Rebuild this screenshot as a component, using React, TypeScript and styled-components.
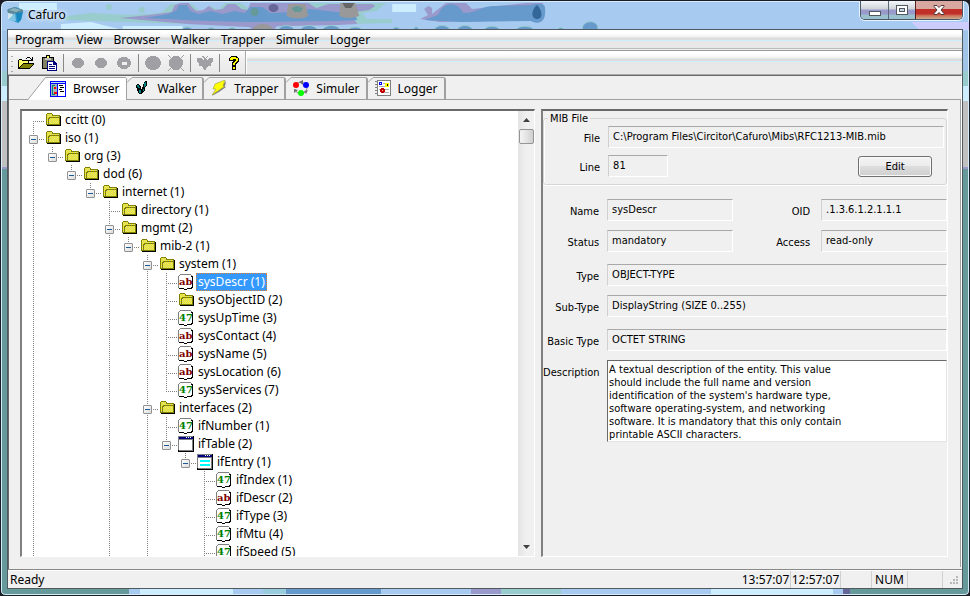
import React, { useState } from 'react';
import styled, { createGlobalStyle, css } from 'styled-components';

const GlobalStyle = createGlobalStyle`
  * { box-sizing: border-box; }
  body { margin: 0; background: #1c1c24; }
  button, input, textarea { font: inherit; color: inherit; margin: 0; }
`;

const uiFont = '"Noto Sans", "Open Sans", sans-serif';
const formFont = '"DejaVu Sans Condensed", "DejaVu Sans", sans-serif';

const glass = css`
  background: linear-gradient(#ffffff 0 3px, #f0f0f0 7px, #dcdcdc 8px 10px, #cceeff 10px 11px, #e8e8e8 11px);
`;

/* ---------- window frame ---------- */

const Frame = styled.div`
  position: relative;
  isolation: isolate;
  height: 100vh;
  display: flex;
  flex-direction: column;
  overflow: hidden;
  padding: 0 6px 6px;
  border: 1px solid #1c1c24;
  border-radius: 7px 7px 5px 5px;
  box-shadow: inset 0 0 0 1px #d4ecfc;
  font: 12px/16px ${uiFont};
  color: #000;
  background:
    linear-gradient(90deg, #669999 0 128px, #a6caf0 128px 139px, #cceeff 139px 232px, #a6caf0 232px 262px, #99ccdd 262px 285px, #6699cc 285px 380px, #a6caf0 380px 470px, #9999cc 470px 500px, #99cccc 500px 560px, #a6caf0 560px 710px, #cceeff 710px 832px, #a6caf0 832px 842px, #666699 842px 849px, #669999 849px) bottom / 100% 7px no-repeat,
    linear-gradient(#a6caf0 0 30px, #9fc4e8 30px 70px, #99cccc 70px 85px, #cceeff 85px 100px, #c0c0c0 100px 166px, #9999cc 166px 168px, #669999 168px);
`;

const Backdrop = styled.svg`
  position: absolute;
  z-index: -1;
  left: 0;
  top: 1px;
  width: 100%;
  height: 28px;
`;

const TitleBar = styled.header`
  display: flex;
  align-items: center;
  height: 28px;
  flex: none;
`;

const Title = styled.h1`
  flex: 1;
  margin: 0 0 0 4px;
  font-size: 12px;
  line-height: 16px;
  font-weight: 400;
  text-shadow: 0 0 6px #fff, 0 0 4px #fff;
`;

const Caption = styled.div`
  align-self: flex-start;
  display: flex;
  height: 19px;
  border: 1px solid #4a5868;
  border-top: 0;
  border-radius: 0 0 5px 5px;
  overflow: hidden;
  box-shadow: 0 0 0 1px #e6f2fc;
`;

const CaptionButton = styled.button<{ $close?: boolean }>`
  width: ${p => (p.$close ? 47 : 27)}px;
  padding: 0;
  border: 0;
  border-left: 1px solid ${p => (p.$close ? '#5a2020' : '#5a6878')};
  background: ${p => (p.$close
    ? 'linear-gradient(#d8a8a0 0 8px, #c03028 8px 13px, #cc6650 14px, #c8b090)'
    : 'linear-gradient(#f4f8fc 0, #cfd4da 8px, #9999cc 9px 13px, #99c0cc 14px)')};
  display: flex;
  align-items: center;
  justify-content: center;
  &:first-child { border-left: 0; padding-top: 6px; }
`;

const Client = styled.div`
  flex: 1;
  min-height: 0;
  display: flex;
  flex-direction: column;
  border: 1px solid #505860;
  background: #f0f0f0;
`;

/* ---------- menu and toolbar ---------- */

const MenuBar = styled.nav`
  display: flex;
  flex: none;
  height: 19px;
  padding-left: 2px;
  border-bottom: 1px solid #bbb;
  ${glass}
`;

const MenuItem = styled.button`
  padding: 2px 7px 0 5px;
  border: 0;
  background: none;
  line-height: 16px;
  & + & { padding: 2px 6px 0 5px; }
`;

const ToolBand = styled.div`
  display: flex;
  flex: none;
  height: 25px;
  margin-top: 1px;
  border-top: 1px solid #999;
  border-bottom: 1px solid #aaa;
  ${glass}
`;

const ToolBar = styled.div`
  display: flex;
  align-items: center;
  padding-left: 2px;
  background: linear-gradient(#fafafa, #f0f0f0 8px, #e9e9e9);
  border-right: 1px solid #aaa;
  box-shadow: 1px 0 0 #fff;
`;

const Grip = styled.span`
  width: 4px;
  height: 18px;
  background: radial-gradient(circle, #aaa 1px, transparent 1px) 0 0 / 4px 5px;
`;

const ToolButton = styled.button`
  width: 23px;
  height: 22px;
  padding: 0;
  border: 0;
  background: none;
  display: flex;
  align-items: center;
  justify-content: center;
`;

const ToolSeparator = styled.span`
  width: 6px;
  height: 18px;
  background: linear-gradient(#888, #888) 3px 0 / 1px 100% no-repeat;
`;

/* ---------- tabs ---------- */

const Workspace = styled.main`
  flex: 1;
  min-height: 0;
  display: flex;
  flex-direction: column;
  border: 1px solid #696969;
  border-right-color: #fff;
  border-bottom: 0;
  padding: 0 0 2px;
`;

const TabStrip = styled.div`
  display: flex;
  flex: none;
  height: 23px;
  padding: 1px 0 0 19px;
`;

const Tab = styled.button<{ $active?: boolean }>`
  display: flex;
  align-items: center;
  height: 22px;
  padding: 0 6px 0 0;
  border: 0;
  border-right: 2px solid #a0a0a0;
  border-radius: 0 3px 0 0;
  color: #000;
  background: linear-gradient(#a0a0a0, #a0a0a0) 5px 0 / 100% 1px no-repeat;
  ${p => p.$active && css`
    position: relative;
    height: 23px;
    padding-right: 7px;
    border-right: 1px solid #a0a0a0;
    background: linear-gradient(90deg, transparent 17px, #a0a0a0 17px) 0 0 / 100% 1px no-repeat,
      linear-gradient(90deg, transparent 17px, #fff 17px);
  `}
`;

const TabText = styled.span`
  margin-left: 7px;
  padding-top: 1px;
`;

const TabPage = styled.section`
  flex: 1;
  min-height: 0;
  display: grid;
  grid-template-columns: minmax(0, 514fr) minmax(0, 406fr);
  grid-template-rows: minmax(0, 1fr);
  column-gap: 6px;
  padding: 9px 12px 10px 11px;
  border-top: 1px solid #a0a0a0;
  border-right: 1px solid #a0a0a0;
`;

const Sunken = styled.div`
  border: 1px solid #fff;
  border-top: 2px solid #696969;
  border-left: 2px solid #808080;
`;

/* ---------- tree ---------- */

const TreePane = styled(Sunken)`
  display: flex;
  background: #fff;
`;

const TreeList = styled.ul`
  flex: 1;
  min-width: 0;
  margin: 0;
  padding: 0 0 0 2px;
  overflow: hidden;
  list-style: none;
`;

const TreeRow = styled.li`
  display: flex;
  align-items: center;
  height: 18px;
`;

const dotsDown = 'repeating-linear-gradient(#808080 0 1px, transparent 1px 2px)';
const dotsAcross = 'repeating-linear-gradient(90deg, #808080 0 1px, transparent 1px 2px)';

const Guide = styled.span<{ $on: boolean }>`
  flex: none;
  width: 19px;
  height: 18px;
  background: ${p => (p.$on ? `${dotsDown} 9px 0 / 1px 18px no-repeat` : 'none')};
`;

const Joint = styled.span<{ $first: boolean; $last: boolean }>`
  flex: none;
  display: flex;
  width: 21px;
  height: 18px;
  padding: 6px 0 0 5px;
  background:
    ${dotsDown} 9px ${p => (p.$first ? 10 : 0)}px / 1px ${p => (p.$first ? 8 : p.$last ? 10 : 18)}px no-repeat,
    ${dotsAcross} 9px 10px / 12px 1px no-repeat;
`;

const Toggle = styled.button`
  width: 9px;
  height: 9px;
  padding: 0;
  border: 1px solid #919191;
  border-radius: 1px;
  background:
    linear-gradient(#1e5a96, #1e5a96) center / 5px 1px no-repeat,
    linear-gradient(135deg, #fff, #dcdcdc);
`;

const NodeLabel = styled.button<{ $selected: boolean }>`
  flex: none;
  height: 18px;
  margin-left: 2px;
  padding: 0 1px;
  border: 1px ${p => (p.$selected ? 'dotted #e08030' : 'solid transparent')};
  background: ${p => (p.$selected ? '#3399ff' : 'none')};
  color: ${p => (p.$selected ? '#fff' : '#000')};
  line-height: 16px;
  white-space: nowrap;
`;

const ScrollTrack = styled.div`
  flex: none;
  width: 16px;
  display: flex;
  flex-direction: column;
  align-items: center;
  background: linear-gradient(90deg, #e3e3e3, #f0f0f0 8px);
`;

const ScrollArrow = styled.button<{ $end?: boolean }>`
  display: flex;
  align-items: center;
  justify-content: center;
  width: 16px;
  height: 18px;
  padding: 0;
  margin-top: ${p => (p.$end ? 'auto' : '0')};
  border: 0;
  background: none;
`;

const ScrollThumb = styled.div`
  width: 15px;
  height: 15px;
  border: 1px solid #959595;
  border-radius: 2px;
  background: linear-gradient(90deg, #f4f4f4, #e4e4e4 50%, #cfcfcf);
`;

/* ---------- details form ---------- */

const Details = styled(Sunken)`
  padding-top: 1px;
  font: 11px/13px ${formFont};
  color: #000;
  overflow: hidden;
`;

const Group = styled.fieldset`
  min-width: 0;
  margin: 0 0 14px;
  padding: 0 2px 7px 0;
  border: 1px solid #d5d5d5;
  border-radius: 3px;
  box-shadow: inset 1px 0 0 #fff, 0 1px 0 #fff;
`;

const GroupTitle = styled.legend`
  margin-left: 4px;
  padding: 0 2px;
`;

const FormRow = styled.div<{ $pair?: boolean; $gap?: number }>`
  display: grid;
  grid-template-columns: ${p => (p.$pair ? '56px minmax(0, 1fr) 72px minmax(0, 1fr)' : '56px minmax(0, 1fr)')};
  column-gap: 8px;
  margin-top: ${p => p.$gap ?? 0}px;
`;

const FieldLabel = styled.label<{ $inner?: boolean }>`
  padding: 6px ${p => (p.$inner ? 3 : 0)}px 0 0;
  text-align: right;
  white-space: nowrap;
`;

const Field = styled.input<{ $short?: boolean }>`
  width: ${p => (p.$short ? '60px' : '100%')};
  height: 22px;
  padding: 0 4px 2px;
  border: 1px solid #fff;
  border-top-color: #a8a8a8;
  border-left-color: #d0d0d0;
  background: #f0f0f0;
  outline: 0;
`;

const LineCell = styled.div`
  display: flex;
  justify-content: space-between;
  align-items: center;
  padding-right: 12px;
`;

const EditButton = styled.button`
  width: 74px;
  height: 21px;
  padding: 0;
  border: 1px solid #707070;
  border-radius: 3px;
  background: linear-gradient(#f4f4f4, #ebebeb 50%, #dddddd 50%, #cfcfcf);
  box-shadow: inset 0 0 0 1px #fafafa;
`;

const Memo = styled.textarea`
  display: block;
  width: 100%;
  height: 82px;
  padding: 2px 0 0 1px;
  border: 1px solid #e3e3e3;
  border-top: 1px solid #696969;
  border-left: 1px solid #696969;
  border-radius: 0;
  background: #fff;
  resize: none;
  outline: 0;
  overflow: hidden;
`;

/* ---------- status bar ---------- */

const StatusBar = styled.footer`
  display: flex;
  flex: none;
  height: 19px;
  border-top: 1px solid #888;
  box-shadow: inset 0 1px 0 #fff;
`;

const StatusCell = styled.span<{ $w?: number }>`
  ${p => (p.$w ? `width: ${p.$w}px;` : 'flex: 1;')}
  padding: 1px 3px 0 2px;
  margin-top: 1px;
  white-space: nowrap;
  border-right: 1px solid #d0d0d0;
  &:first-child, &:last-child { border-right: 0; }
`;

const ClockCell = styled(StatusCell)`
  padding: 1px 0 0;
  text-align: center;
`;

/* ---------- drawings ---------- */

const Pixels = ({ w = 16, h = 16, children }: { w?: number; h?: number; children: React.ReactNode }) => (
  <svg width={w} height={h} viewBox={`0 0 ${w} ${h}`} shapeRendering="crispEdges" aria-hidden="true">
    {children}
  </svg>
);

const TitleArt = () => (
  <Backdrop viewBox="0 0 970 28" preserveAspectRatio="none" aria-hidden="true">
    <path fill="#cceeff" d="M18 1h38v7H18zM60 22l30-2 32 8H60zM122 24h60v4h-60zM392 2h24v8h-24z" />
    <path fill="#99cccc" d="M66 14l24-3 40 2 30-2 10-9h22l8 8 10-6 8 4 6-7h16l8 5 4-5h84l50 0 -10 8-14 2 5 6h25v4l-140 3-190-6z" />
    <path fill="#a6caf0" d="M82 1h88l-8 8-32 2-44-1zM344 10l10 0 0 4-6 0z" />
    <circle cx="108" cy="5" r="3" fill="#99cccc" />
    <circle cx="141" cy="8" r="3" fill="#99cccc" />
    <path fill="#9999cc" d="M119 16l30-3 22-3 3-7 6-2h8l4 5 4 3 7-1 5-4 6 4 8-1 5-5h8l6 5 6 1 3-7h58l8 5 12-4h44l3 2-6 4-14 2-2 6 4 6-20 1-90 2-60-3z" />
    <path fill="#6699cc" d="M144 16l24-4 8-4 2-5h8l4 6 8 3 12-3 12 3 12-3 10 2 6-6h12l8 6 26-1 14-3 26 3h18l3 8-20 1-90 1-40-1z" />
    <ellipse cx="273" cy="6" rx="5" ry="4" fill="#666699" />
    <ellipse cx="254" cy="10" rx="4" ry="4" fill="#669999" />
    <path fill="#999999" d="M288 2h17l3 12q-10 5-22 0zM340 1h15l4 13q-11 4-20 0z" />
    <path fill="#669999" d="M291 6l6-2 6 2-3 4h-6z" />
    <path fill="#666666" d="M342 1h12l-3 5h-6z" />
    <path fill="#9999cc" d="M420 17l8-4-4-6 4-3 4 2 0 6 14-11h20l6 6 54-6h17l-3 17-100 2z" />
    <path fill="#6699cc" d="M424 18l14-5c5-14 20-14 25-2 14 0 18-7 32-7l36-1c5-2 14-2 14 2 2 16-6 18-14 14l-70 1z" />
    <path fill="#336699" d="M537 3c5 4 7 14 0 14-6 0-6-9 0-14z" />
    <path fill="#9999cc" d="M244 20h34l-4 8h-22z" />
    <path fill="#999999" d="M252 28c2-8 18-8 21 0z" />
    <g fill="#6699cc" stroke="#99cccc" strokeWidth="1">
      <path d="M181 28c2-4 9-4 11 0zM206 28c2-3 7-3 9 0zM227 28c2-3 7-3 9 0zM278 28c2-6 14-6 16 0zM300 28c2-6 15-6 17 0zM322 28c2-6 16-6 18 0zM348 28c2-4 12-4 14 0zM392 28c2-4 6-4 8 0zM413 28c2-4 4-4 6 0zM434 28c2-6 14-6 16 0zM457 28c2-6 14-6 16 0zM484 28c2-5 14-5 16 0zM516 28c2-5 16-5 18 0zM557 28c2-3 6-3 8 0z" />
      <path d="M583 28c-3-10 17-12 15 0z" />
    </g>
    <path fill="#ccccff" d="M912 20h58v8h-50z" />
  </Backdrop>
);

const AppLogo = () => (
  <svg width="17" height="16" viewBox="0 0 17 16" aria-hidden="true">
    <path d="M1 2l8-2 7 3-2 9-3 4-5-2-5-2z" fill="#3399cc" />
    <path d="M0 3l7-3 9 3v2L9 7 1 6z" fill="#608898" />
    <path d="M2 3l5-2 7 2-5 2z" fill="#88b4c0" />
    <path d="M1 6l5 1-1 4-4 2z" fill="#d0e4ec" />
    <path d="M9 6l7-1-2 8-3 3z" fill="#1888c0" />
    <path d="M1 13l7-7 1 8-3 0z" fill="#80c4e4" />
  </svg>
);

const Folder = () => (
  <Pixels>
    <defs>
      <pattern id="folderDither" width="2" height="2" patternUnits="userSpaceOnUse">
        <path fill="#ffff00" d="M0 0h2v2H0z" />
        <path fill="#cccc99" d="M1 0h1v1H1zM0 1h1v1H0z" />
      </pattern>
    </defs>
    <path fill="#000" d="M15 4h1v10h-1zM2 13h14v1H2z" />
    <path fill="#808000" d="M1 2h1V1h5v1h1v1h7v10H1z" />
    <path fill="url(#folderDither)" d="M2 2h5v2h7v1H5v1H3v6H2zM4 7h1V6h9v6H3V8h1z" />
    <path fill="#808000" d="M3 6h1V5h10v1H4v6H3z" />
  </Pixels>
);

const PageArt = ({ text, color }: { text: string; color: string }) => (
  <svg width="16" height="16" viewBox="0 0 16 16" aria-hidden="true">
    <g shapeRendering="crispEdges">
      <path fill="#808080" d="M2 0h11v1H2zM1 1h1v1H1zM0 2h1v12H0zM13 1h1v2h-1z" />
      <path fill="#000" d="M13 2h2v12h-1v1h-1v-1h1V3h-1zM1 14h5v1H1zM6 15h3v1H6zM9 14h4v-1h1v2H9z" />
      <path fill="#fff" d="M2 1h11v2h1v10h-5v1H1V2h1z" />
    </g>
    <text x="1" y="11" fontFamily="DejaVu Serif" fontSize="10" fontWeight="700" fill={color}>{text}</text>
  </svg>
);

const TableArt = ({ rows }: { rows?: boolean }) => (
  <Pixels>
    <path fill="#808080" d="M0 0h15v15H0z" />
    <path fill="#000" d="M15 0h1v16H0v-2h1v1h14z" />
    <path fill="#000080" d="M1 1h14v2H1z" />
    <path fill="#fff" d="M1 4h13v10H1zM8 1h1v1H8zM10 1h1v1h-1zM12 1h1v1h-1z" />
    {rows && <path fill="#00ffff" d="M3 6h10v2H3zM3 10h10v2H3z" />}
  </Pixels>
);

const OpenIcon = () => (
  <Pixels>
    <path fill="#000" d="M9 2h3v1H9zM8 3h1v1H8zM12 3h1v1h-1zM14 2h1v4h-4V5h2V4h1zM1 5h3V4H1zM0 5h1v9H0zM4 5h7v1H4zM10 6h1v3h-1zM5 8h11v1H5zM4 9h1v1H4zM3 10h1v1H3zM2 11h1v1H2zM1 12h1v2H1zM15 9h1v1h-1zM14 10h1v1h-1zM13 11h1v1h-1zM12 12h1v1h-1zM1 13h11v1H1z" />
    <path fill="#ffff66" d="M1 5h3v1h6v2H5v1H4v1H3v1H2v1H1z" />
    <path fill="#808000" d="M5 9h10v1h-1v1h-1v1h-1v1H2v-1h1v-1h1v-1h1z" />
  </Pixels>
);

const PasteIcon = () => (
  <Pixels>
    <path fill="#000" d="M5 0h4v2h4v12H1V2h4z" />
    <path fill="#808066" d="M2 3h10v10H2z" />
    <path fill="#ffff66" d="M6 1h2v2H6z" />
    <path fill="#c0c0c0" d="M4 3h6v2H4z" />
    <path fill="#000080" d="M6 6h7l3 3v7H6z" />
    <path fill="#fff" d="M7 7h5v3h3v5H7z" />
    <path fill="#000080" d="M8 9h3v1H8zM8 11h6v1H8zM8 13h6v1H8z" />
  </Pixels>
);

const DotIcon = ({ rx, ry, hole, rays }: { rx: number; ry: number; hole?: boolean; rays?: boolean }) => (
  <Pixels>
    <ellipse cx="8" cy="8" rx={rx} ry={ry} fill="#a0a0a4" />
    {hole && <path fill="#f0f0f0" d="M6 7h5v3H6z" />}
    {rays && <path stroke="#a0a0a4" d="M0 0l16 16M16 0L0 16" />}
  </Pixels>
);

const BugIcon = () => (
  <Pixels>
    <path fill="#a0a0a4" d="M0 3h4l2 2 1-1-2-3h1l2 2 2-2h1L9 4l1 1 2-2h4v4l-2 1v3h-2l-2 1-1 3H7l-1-3-2-1H2V8L0 7z" />
  </Pixels>
);

const HelpIcon = () => (
  <Pixels>
    <path fill="#000" d="M5 1h6v1h1v1h1v4h-1v1h-1v1h-1v2H6V7h1V6H3V3h1V2h1zM6 11h4v4H6z" />
    <path fill="#ffff00" d="M5 2h5v1h2v3h-1v1h-1v1H9v2H7V8h1V7h1V6h1V4H7v1H4V3h1zM7 12h2v2H7z" />
  </Pixels>
);

const BrowserIcon = () => (
  <Pixels>
    <path fill="#0000ff" d="M0 0h16v16H0z" />
    <path fill="#c0e0ff" d="M1 1h14v1H1z" />
    <path fill="#fff" d="M8 3h7v12H8z" />
    <path fill="#a0b8b8" d="M1 3h6v12H1z" />
    <path fill="#008080" d="M2 4h3v1H3v8h2v1H2z" />
    <path fill="#ff0000" d="M4 6h2v2H4zM4 11h3v2H4z" />
    <path fill="#000" d="M9 4h4v1H9zM10 6h4v1h-4zM9 8h3v1H9zM10 10h4v1h-4z" />
  </Pixels>
);

const WalkerIcon = () => (
  <Pixels>
    <path fill="#000" d="M3 4h2l2 3v2l1 1v3l-1 1H5l-1-2-1-3-1-2zM11 1h2v4l-2 3v2l-2 3H8V9l1-4z" />
    <path fill="#008080" d="M3 5h2l1 3H4zM5 10h2v3H5zM11 2h1v3l-2 2V5zM9 9h1v2H9z" />
  </Pixels>
);

const TrapperIcon = () => (
  <svg width="16" height="16" viewBox="0 0 16 16" aria-hidden="true">
    <path d="M15 1l-1 6h1L8 12l-7 4 4-5z" fill="#808080" />
    <path d="M4 4l10-4-2 6h2L7 11l-6 4 4-6H2z" fill="#ffff00" stroke="#a0a040" strokeWidth=".6" />
  </svg>
);

const SimulerIcon = () => (
  <svg width="16" height="16" viewBox="0 0 16 16" aria-hidden="true">
    <circle cx="8" cy="8" r="6" fill="none" stroke="#909090" strokeDasharray="7 3" />
    <path fill="#707070" d="M10 0v5L6 2zM1 9l4 1-4 3zM11 11l4-1-2 4z" />
    <circle cx="3" cy="5" r="3" fill="#ff0000" />
    <circle cx="13" cy="5" r="3" fill="#0000ff" />
    <circle cx="8" cy="13" r="3" fill="#00ff00" />
  </svg>
);

const LoggerIcon = () => (
  <Pixels>
    <path fill="#808080" d="M2 0h14v16H2zM0 1h2v1H0zM0 4h2v1H0zM0 7h2v1H0zM0 10h2v1H0zM0 13h2v1H0z" />
    <path fill="#fff" d="M3 1h12v14H3z" />
    <path fill="#b0b0b0" d="M8 3h6v1H8zM4 6h9v1H4zM4 9h10v1H4zM9 12h5v1H9z" />
    <path fill="#0000ff" d="M4 2h3v3H4z" />
    <path fill="#fff" d="M5 3h1v1H5z" />
    <path fill="#ffff00" d="M10 3h4v4h-4z" />
    <path fill="#000" d="M12 4h1v2h-1z" />
    <path fill="#c00000" d="M6 8h3v1h1v3H9v1H6v-1H5V9h1z" />
    <path fill="#ffb0b0" d="M7 10h1v1H7z" />
  </Pixels>
);

const Slant = ({ active }: { active?: boolean }) =>
  active ? (
    <svg width="22" height="23" viewBox="0 0 22 23" aria-hidden="true">
      <path d="M0 23L18 0v23z" fill="#fff" />
      <path d="M0 22.5L17.5 .5H22" fill="none" stroke="#a0a0a0" />
    </svg>
  ) : (
    <svg width="7" height="22" viewBox="0 0 7 22" aria-hidden="true">
      <path d="M0 5.5L5 .5h2" fill="none" stroke="#a0a0a0" />
    </svg>
  );

const Arrow = ({ down }: { down?: boolean }) => (
  <svg width="7" height="4" viewBox="0 0 7 4" aria-hidden="true">
    <path d={down ? 'M0 0h7L3.5 4z' : 'M0 4h7L3.5 0z'} fill="#404040" />
  </svg>
);

const SizeGrip = () => (
  <Pixels w={14} h={14}>
    <path fill="#b8b8b8" d="M11 4h2v2h-2zM8 7h2v2H8zM11 7h2v2h-2zM5 10h2v2H5zM8 10h2v2H8zM11 10h2v2h-2z" />
  </Pixels>
);

/* ---------- data ---------- */

type Kind = 'folder' | 'string' | 'number' | 'table' | 'entry';
interface Node { name: string; kind?: Kind; kids?: Node[]; more?: boolean }

const str = (name: string): Node => ({ name, kind: 'string' });
const num = (name: string): Node => ({ name, kind: 'number' });

const mib: Node[] = [
  { name: 'ccitt (0)' },
  { name: 'iso (1)', more: true, kids: [
    { name: 'org (3)', kids: [
      { name: 'dod (6)', kids: [
        { name: 'internet (1)', kids: [
          { name: 'directory (1)' },
          { name: 'mgmt (2)', more: true, kids: [
            { name: 'mib-2 (1)', kids: [
              { name: 'system (1)', kids: [
                str('sysDescr (1)'), { name: 'sysObjectID (2)' }, num('sysUpTime (3)'), str('sysContact (4)'),
                str('sysName (5)'), str('sysLocation (6)'), num('sysServices (7)'),
              ] },
              { name: 'interfaces (2)', more: true, kids: [
                num('ifNumber (1)'),
                { name: 'ifTable (2)', kind: 'table', kids: [
                  { name: 'ifEntry (1)', kind: 'entry', kids: [
                    num('ifIndex (1)'), str('ifDescr (2)'), num('ifType (3)'), num('ifMtu (4)'),
                    { ...num('ifSpeed (5)'), more: true },
                  ] },
                ] },
              ] },
            ] },
          ] },
        ] },
      ] },
    ] },
  ] },
];

const glyphs: Record<Kind, React.ReactNode> = {
  folder: <Folder />,
  string: <PageArt text="ab" color="#800000" />,
  number: <PageArt text="47" color="#008000" />,
  table: <TableArt />,
  entry: <TableArt rows />,
};

interface BranchProps {
  nodes: Node[];
  guides?: boolean[];
  selected: string;
  closed: string[];
  onSelect: (name: string) => void;
  onToggle: (name: string) => void;
}

const Branch = ({ nodes, guides = [], ...rest }: BranchProps) => (
  <>
    {nodes.map((node, i) => {
      const last = i === nodes.length - 1 && !node.more;
      return (
        <React.Fragment key={node.name}>
          <TreeRow>
            {guides.map((on, g) => <Guide key={g} $on={on} />)}
            <Joint $first={guides.length === 0 && i === 0} $last={last}>
              {node.kids && <Toggle aria-label={`Toggle ${node.name}`} onClick={() => rest.onToggle(node.name)} />}
            </Joint>
            {glyphs[node.kind ?? 'folder']}
            <NodeLabel $selected={rest.selected === node.name} onClick={() => rest.onSelect(node.name)}>
              {node.name}
            </NodeLabel>
          </TreeRow>
          {node.kids && !rest.closed.includes(node.name) && (
            <Branch nodes={node.kids} guides={[...guides, !last]} {...rest} />
          )}
        </React.Fragment>
      );
    })}
  </>
);

const tabs = [
  { name: 'Browser', icon: <BrowserIcon /> },
  { name: 'Walker', icon: <WalkerIcon /> },
  { name: 'Trapper', icon: <TrapperIcon /> },
  { name: 'Simuler', icon: <SimulerIcon /> },
  { name: 'Logger', icon: <LoggerIcon /> },
];

const tools: (null | { name: string; icon: React.ReactNode })[] = [
  { name: 'Open', icon: <OpenIcon /> },
  { name: 'Paste', icon: <PasteIcon /> },
  null,
  { name: 'Get', icon: <DotIcon rx={6} ry={5} /> },
  { name: 'Get next', icon: <DotIcon rx={6} ry={5} /> },
  { name: 'Set', icon: <DotIcon rx={7} ry={6} hole /> },
  null,
  { name: 'Walk', icon: <DotIcon rx={8} ry={7} /> },
  { name: 'Stop', icon: <DotIcon rx={7} ry={7} rays /> },
  null,
  { name: 'Trap', icon: <BugIcon /> },
  null,
  { name: 'Help', icon: <HelpIcon /> },
];

const description = `A textual description of the entity. This value
should include the full name and version
identification of the system's hardware type,
software operating-system, and networking
software. It is mandatory that this only contain
printable ASCII characters.`;

const TextField = ({ id, label, value, inner }: { id: string; label: string; value: string; inner?: boolean }) => (
  <>
    <FieldLabel htmlFor={id} $inner={inner}>{label}</FieldLabel>
    <Field id={id} value={value} readOnly />
  </>
);

export default function App() {
  const [selected, setSelected] = useState('sysDescr (1)');
  const [closed, setClosed] = useState<string[]>([]);
  const toggle = (name: string) =>
    setClosed(list => (list.includes(name) ? list.filter(n => n !== name) : [...list, name]));

  return (
    <>
      <GlobalStyle />
      <Frame>
        <TitleArt />
        <TitleBar>
          <AppLogo />
          <Title>Cafuro</Title>
          <Caption>
            <CaptionButton aria-label="Minimize">
              <Pixels w={12} h={5}><path fill="#505860" d="M0 0h12v5H0z" /><path fill="#fff" d="M1 1h10v3H1z" /></Pixels>
            </CaptionButton>
            <CaptionButton aria-label="Maximize">
              <Pixels w={12} h={10}>
                <path fill="#505860" d="M0 0h12v10H0z" /><path fill="#fff" d="M1 1h10v8H1z" />
                <path fill="#505860" d="M3 3h6v4H3z" /><path fill="#c8d4e0" d="M4 4h4v2H4z" />
              </Pixels>
            </CaptionButton>
            <CaptionButton aria-label="Close" $close>
              <svg width="12" height="10" viewBox="0 0 12 10" aria-hidden="true">
                <path d="M1 .5h3l2 2 2-2h3v1L8 5l3 3.500v1H8l-2-2-2 2H1v-1L4 5 1 1.500z" fill="#fff" stroke="#503838" />
              </svg>
            </CaptionButton>
          </Caption>
        </TitleBar>
        <Client>
          <MenuBar>
            {['Program', 'View', 'Browser', 'Walker', 'Trapper', 'Simuler', 'Logger'].map(item => (
              <MenuItem key={item}>{item}</MenuItem>
            ))}
          </MenuBar>
          <ToolBand>
            <ToolBar>
              <Grip />
              {tools.map((tool, i) =>
                tool ? <ToolButton key={i} aria-label={tool.name}>{tool.icon}</ToolButton> : <ToolSeparator key={i} />
              )}
            </ToolBar>
          </ToolBand>
          <Workspace>
            <TabStrip role="tablist">
              {tabs.map((tab, i) => (
                <Tab key={tab.name} role="tab" aria-selected={i === 0} $active={i === 0}>
                  <Slant active={i === 0} />
                  {tab.icon}
                  <TabText>{tab.name}</TabText>
                </Tab>
              ))}
            </TabStrip>
            <TabPage>
              <TreePane>
                <TreeList>
                  <Branch nodes={mib} selected={selected} closed={closed} onSelect={setSelected} onToggle={toggle} />
                </TreeList>
                <ScrollTrack>
                  <ScrollArrow aria-label="Scroll up"><Arrow /></ScrollArrow>
                  <ScrollThumb />
                  <ScrollArrow aria-label="Scroll down" $end><Arrow down /></ScrollArrow>
                </ScrollTrack>
              </TreePane>
              <Details>
                <Group>
                  <GroupTitle>MIB File</GroupTitle>
                  <FormRow $gap={1}>
                    <TextField id="file" label="File" value="C:\Program Files\Circitor\Cafuro\Mibs\RFC1213-MIB.mib" />
                  </FormRow>
                  <FormRow $gap={7}>
                    <FieldLabel htmlFor="line">Line</FieldLabel>
                    <LineCell>
                      <Field id="line" value="81" readOnly $short />
                      <EditButton>Edit</EditButton>
                    </LineCell>
                  </FormRow>
                </Group>
                <FormRow $pair>
                  <TextField id="name" label="Name" value="sysDescr" />
                  <TextField id="oid" label="OID" value=".1.3.6.1.2.1.1.1" inner />
                </FormRow>
                <FormRow $pair $gap={9}>
                  <TextField id="status" label="Status" value="mandatory" />
                  <TextField id="access" label="Access" value="read-only" inner />
                </FormRow>
                <FormRow $gap={12}><TextField id="type" label="Type" value="OBJECT-TYPE" /></FormRow>
                <FormRow $gap={9}><TextField id="subtype" label="Sub-Type" value="DisplayString (SIZE 0..255)" /></FormRow>
                <FormRow $gap={12}><TextField id="basictype" label="Basic Type" value="OCTET STRING" /></FormRow>
                <FormRow $gap={9}>
                  <FieldLabel htmlFor="description">Description</FieldLabel>
                  <Memo id="description" value={description} readOnly />
                </FormRow>
              </Details>
            </TabPage>
          </Workspace>
          <StatusBar>
            <StatusCell>Ready</StatusCell>
            <ClockCell $w={50}>13:57:07</ClockCell>
            <ClockCell $w={50}>12:57:07</ClockCell>
            <StatusCell $w={31} />
            <ClockCell $w={36}>NUM</ClockCell>
            <StatusCell $w={35} />
            <StatusCell $w={19}><SizeGrip /></StatusCell>
          </StatusBar>
        </Client>
      </Frame>
    </>
  );
}
